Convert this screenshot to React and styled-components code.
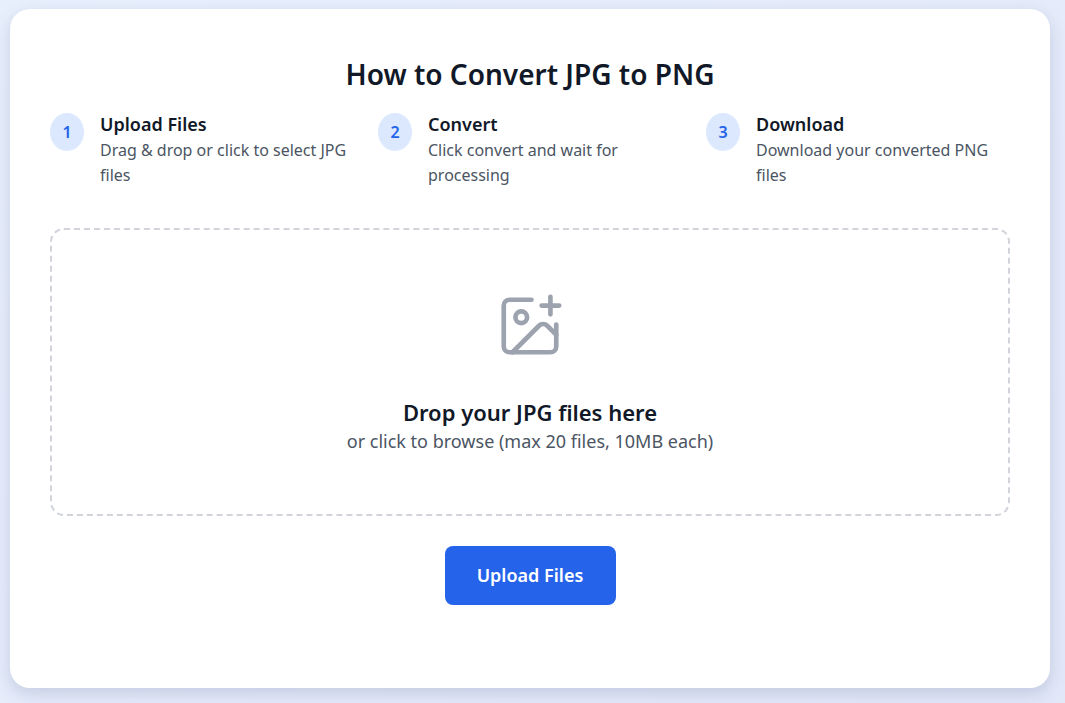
import React from "react";
import styled, { createGlobalStyle } from "styled-components";
import { ImagePlus } from "lucide-react";

const Global = createGlobalStyle`
  body { margin: 0; background: linear-gradient(135deg,#e8effc,#e2e8f8); font-family: "Noto Sans", sans-serif; }
`;
const Page = styled.div`padding: 9px 15px 15px 10px; height: 703px; box-sizing: border-box;`;
const Card = styled.div`
  background: #fff; border-radius: 20px; box-shadow: 0 6px 16px rgba(100,116,160,0.25);
  padding: 50px 40px 80px; height: 679px; box-sizing: border-box;
`;
const Title = styled.h2`margin: 0 0 22px; text-align: center; font-size: 28px; font-weight: 600; color: #111827; line-height: 1.1;`;
const Steps = styled.div`display: grid; grid-template-columns: repeat(3, 1fr); gap: 24px;`;
const Step = styled.div`display: flex; gap: 16px; align-items: flex-start;`;
const Num = styled.div`
  width: 34px; height: 38px; flex-shrink: 0; border-radius: 50%; background: #dbe8fe; color: #2563eb;
  display: flex; align-items: center; justify-content: center; font-weight: 600; font-size: 16px; margin-top: 1px;
`;
const StepTitle = styled.div`font-size: 18px; font-weight: 600; color: #111827; line-height: 24px;`;
const StepText = styled.div`font-size: 16px; color: #4b5563; line-height: 25px; margin-top: 2px;`;
const Drop = styled.div`
  margin-top: 40px; height: 288px; box-sizing: border-box; border: 2px dashed #d1d5db; border-radius: 14px;
  display: flex; flex-direction: column; align-items: center; justify-content: center; color: #9ca3af;
`;
const DropTitle = styled.div`font-size: 22px; font-weight: 600; color: #111827; margin-top: 36px;`;
const DropSub = styled.div`font-size: 18px; color: #4b5563; margin-top: 2px;`;
const Center = styled.div`display: flex; justify-content: center; margin-top: 30px;`;
const Button = styled.button`
  background: #2563eb; color: #fff; border: none; border-radius: 8px; width: 171px; height: 59px;
  font-family: inherit; font-size: 18px; font-weight: 600;
`;

const steps = [
  ["Upload Files", "Drag & drop or click to select JPG files"],
  ["Convert", "Click convert and wait for processing"],
  ["Download", "Download your converted PNG files"],
];

export default function App() {
  return (
    <Page>
      <Global />
      <Card>
        <Title>How to Convert JPG to PNG</Title>
        <Steps>
          {steps.map(([t, d], i) => (
            <Step key={t}>
              <Num>{i + 1}</Num>
              <div>
                <StepTitle>{t}</StepTitle>
                <StepText>{d}</StepText>
              </div>
            </Step>
          ))}
        </Steps>
        <Drop>
          <ImagePlus size={70} strokeWidth={1.6} />
          <DropTitle>Drop your JPG files here</DropTitle>
          <DropSub>or click to browse (max 20 files, 10MB each)</DropSub>
        </Drop>
        <Center><Button>Upload Files</Button></Center>
      </Card>
    </Page>
  );
}
